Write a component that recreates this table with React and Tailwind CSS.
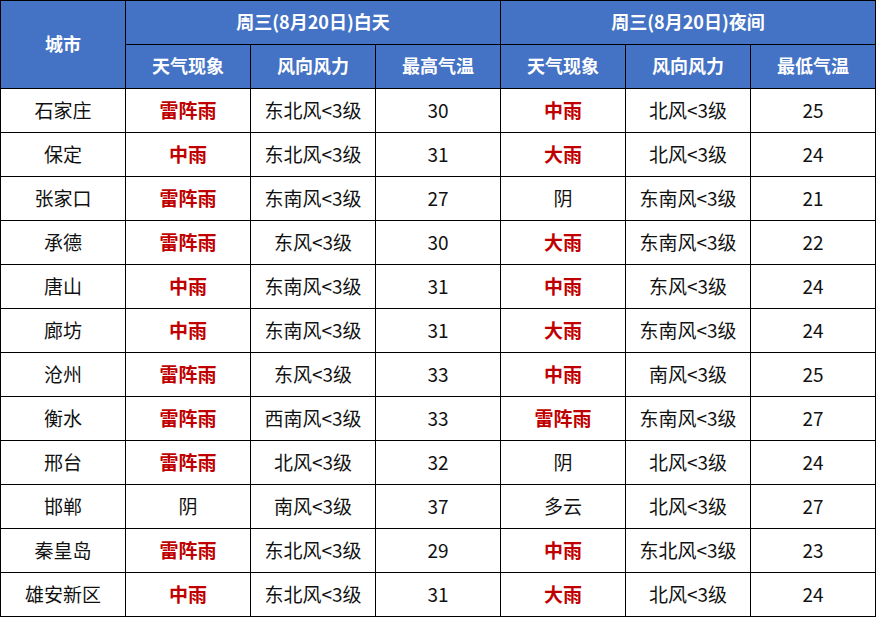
const rows = [
  ["石家庄", "雷阵雨", "东北风<3级", "30", "中雨", "北风<3级", "25"],
  ["保定", "中雨", "东北风<3级", "31", "大雨", "北风<3级", "24"],
  ["张家口", "雷阵雨", "东南风<3级", "27", "阴", "东南风<3级", "21"],
  ["承德", "雷阵雨", "东风<3级", "30", "大雨", "东南风<3级", "22"],
  ["唐山", "中雨", "东南风<3级", "31", "中雨", "东风<3级", "24"],
  ["廊坊", "中雨", "东南风<3级", "31", "大雨", "东南风<3级", "24"],
  ["沧州", "雷阵雨", "东风<3级", "33", "中雨", "南风<3级", "25"],
  ["衡水", "雷阵雨", "西南风<3级", "33", "雷阵雨", "东南风<3级", "27"],
  ["邢台", "雷阵雨", "北风<3级", "32", "阴", "北风<3级", "24"],
  ["邯郸", "阴", "南风<3级", "37", "多云", "北风<3级", "27"],
  ["秦皇岛", "雷阵雨", "东北风<3级", "29", "中雨", "东北风<3级", "23"],
  ["雄安新区", "中雨", "东北风<3级", "31", "大雨", "北风<3级", "24"],
];

const rainy = ["雷阵雨", "中雨", "大雨"];

const Cell = ({ value }) => {
  const hot = rainy.includes(value);
  return (
    <td className={`border border-black text-center pb-[3px] ${hot ? "text-[#c00000] font-bold" : "text-[#111]"}`}>
      {value}
    </td>
  );
};

const App = () => {
  return (
    <div className="w-[876px] h-[617px] bg-white overflow-hidden" style={{ fontFamily: '"Noto Sans CJK SC", "Noto Sans", sans-serif' }}>
      <table className="w-[876px] table-fixed border-collapse border border-black text-[19px] leading-none">
        <colgroup>
          {[0, 1, 2, 3, 4, 5, 6].map((i) => (
            <col key={i} className="w-[125px]" />
          ))}
        </colgroup>
        <thead className="bg-[#4472c4] text-white text-[18px]">
          <tr className="h-[44px]">
            <th rowSpan={2} className="border border-black font-bold pb-[3px]">城市</th>
            <th colSpan={3} className="border border-black font-bold pb-[3px]">周三(8月20日)白天</th>
            <th colSpan={3} className="border border-black font-bold pb-[3px]">周三(8月20日)夜间</th>
          </tr>
          <tr className="h-[44px]">
            {["天气现象", "风向风力", "最高气温", "天气现象", "风向风力", "最低气温"].map((t, i) => (
              <th key={i} className="border border-black font-bold pb-[3px]">{t}</th>
            ))}
          </tr>
        </thead>
        <tbody>
          {rows.map((r) => (
            <tr key={r[0]} className="h-[44px]">
              {r.map((v, i) => (
                <Cell key={i} value={v} />
              ))}
            </tr>
          ))}
        </tbody>
      </table>
    </div>
  );
};

export default App;
